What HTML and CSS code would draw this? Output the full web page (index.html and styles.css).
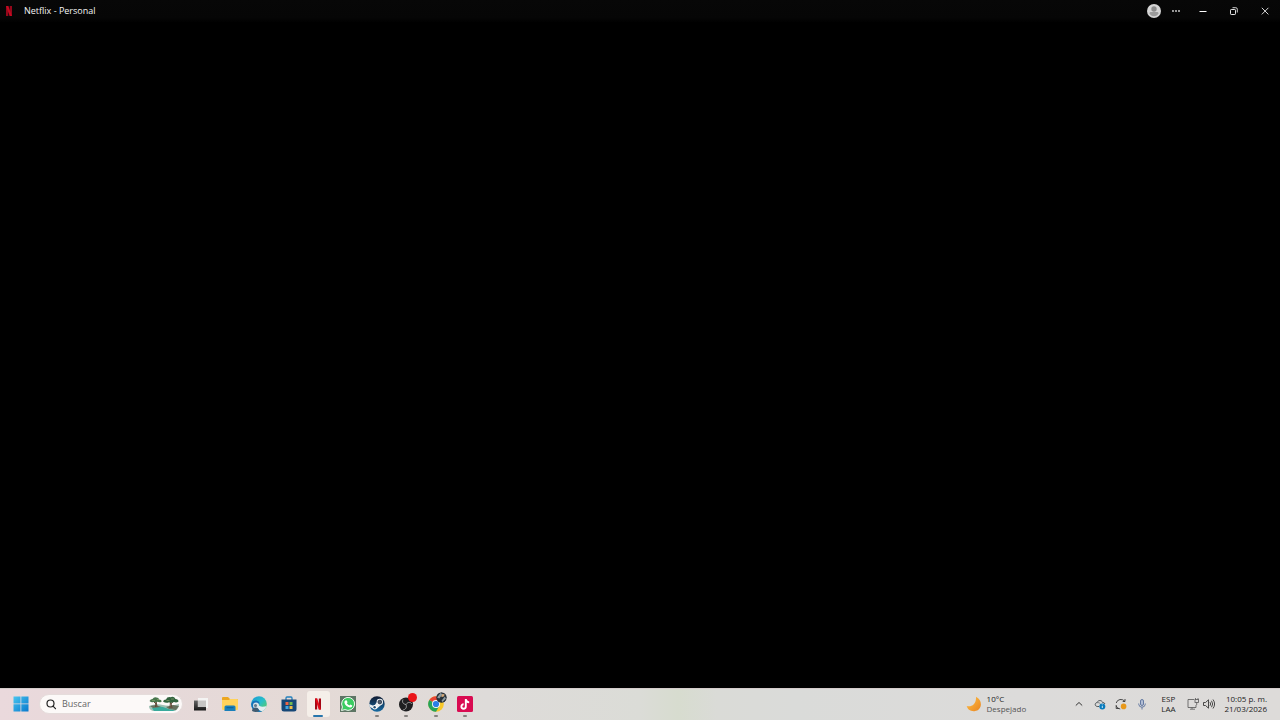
FILE: index.html
```html
<!DOCTYPE html>
<html lang="es">
<head>
<meta charset="utf-8">
<meta name="viewport" content="width=device-width, initial-scale=1">
<title>Netflix - Personal</title>
<link rel="stylesheet" href="styles.css">
</head>
<body>
<header class="titlebar">
  <svg class="app-logo" viewBox="0 0 8 12" aria-hidden="true"><path d="M1 1h2.300v10H1zM4.700 1H7v10H4.700z" fill="#95081b"/><path d="M1 1h2.300L7 11H4.700z" fill="#c40a21"/></svg>
  <h1 class="window-title">Netflix - Personal</h1>
  <button class="profile" aria-label="Perfil"><svg viewBox="0 0 14 14"><circle cx="7" cy="7" r="7" fill="#d5d5d5"/><circle cx="7" cy="5" r="2.7" fill="#8c8c8c"/><path d="M2.6 9.2c0-1 .8-1.2 1.5-1.2h5.8c.7 0 1.5.2 1.5 1.2C11 11.300 9 12.200 7 12.200S3 11.300 2.600 9.200z" fill="#9b9b9b"/></svg></button>
  <button class="more" aria-label="Más opciones"><svg viewBox="0 0 10 10" fill="#ddd"><circle cx="2" cy="5" r=".9"/><circle cx="5" cy="5" r=".9"/><circle cx="8" cy="5" r=".9"/></svg></button>
  <div class="window-controls">
    <button aria-label="Minimizar"><svg viewBox="0 0 10 10"><path d="M1.500 5.500h7" stroke="#fff"/></svg></button>
    <button aria-label="Restaurar"><svg viewBox="0 0 10 10" fill="none" stroke="#e4e4e4"><rect x="1.500" y="3.500" width="5" height="5" rx=".7"/><path d="M3.500 1.700h3.300q1.500 0 1.500 1.500v3.300" stroke-width=".9"/></svg></button>
    <button aria-label="Cerrar"><svg viewBox="0 0 10 10"><path d="M1.800 1.800l6.600 6.600M8.400 1.800l-6.600 6.600" stroke="#eee" stroke-width=".9"/></svg></button>
  </div>
</header>

<main class="player" aria-label="Reproductor"></main>

<footer class="taskbar">
  <button class="start" aria-label="Inicio"><svg viewBox="0 0 16 16"><defs><linearGradient id="win" x2="1" y2="1"><stop stop-color="#48c5ef"/><stop offset="1" stop-color="#0878cd"/></linearGradient></defs><path d="M.5.500h7v7h-7zM8.300.500h7.200v7H8.300zM.500 8.300h7v7.200h-7zM8.300 8.300h7.200v7.200H8.300z" fill="url(#win)"/></svg></button>
  <label class="search">
    <svg class="search-icon" viewBox="0 0 12 12" fill="none" stroke="#222" stroke-width="1.200"><circle cx="5.500" cy="5.500" r="3.500"/><path d="M8 8.100l2.500 2.600" stroke-linecap="round"/></svg>
    <input class="search-input" type="text" placeholder="Buscar" aria-label="Buscar">
    <svg class="search-art" viewBox="0 0 32 16" aria-hidden="true">
      <path d="M1 10q7-3 14-1t16-1q0 5-4 7H5q-4-1-4-5z" fill="#9fc0b4"/>
      <path d="M4 12q8-3 14 0t10 1l-3 2H6z" fill="#38aa9c"/>
      <path d="M2 10l6-1 5 2-8 1zM18 11l7-2 6 1-3 4-7-1z" fill="#65705d"/>
      <path d="M7.500 11l.5-6 1 6M22 12l.5-7 1.500 7M22.800 8l3-3M8 8L5 5" stroke="#634735" fill="none"/>
      <path d="M1.500 5q1-2 3-2Q6 .500 8.500 1.500 11 1.500 11 3.500q3 .500 2.500 2.200-2 1-4 .1-2 1-4 .200-2 1-4-1z" fill="#47764c"/>
      <path d="M15 5.500q.500-2 3-2Q19 .700 22.500 1.200 26 0 27.500 3q3 0 3 2.500-2 1.500-4.500.500-2.500 1.500-5 .200-3 1.300-6-.700z" fill="#31633e"/>
      <path d="M4 4.500h3M9 3.500h2M18.500 4.500h3M23 3h3" stroke="#7c9b67" stroke-width=".8"/>
    </svg>
  </label>

  <nav class="apps" aria-label="Aplicaciones">
    <button class="app" aria-label="Vista de tareas"><svg viewBox="0 0 16 16"><defs><linearGradient id="tv" x2="0" y2="1"><stop stop-color="#666"/><stop offset="1" stop-color="#171717"/></linearGradient></defs><path d="M5 2h10v10H5z" fill="#f4f4f3"/><path d="M1 4.500h3.800V11H13v3.500H1z" fill="url(#tv)"/><path d="M5 4.500h8V11H5z" fill="#c6c5c4"/></svg></button>
    <button class="app" aria-label="Explorador de archivos"><svg viewBox="0 0 16 16"><path d="M0 2q0-1 1-1h5l2 2h7q1 0 1 1v9H0z" fill="#eca720"/><path d="M0 4h7l1-1h7q1 0 1 1v9q0 1-1 1H1q-1 0-1-1z" fill="#ffd35b"/><path d="M2.500 11q0-1.500 1.500-1.500h8q1.500 0 1.500 1.500v4h-11z" fill="#187fba"/><path d="M4.500 11.700h7" stroke="#0b5e92"/></svg></button>
    <button class="app" aria-label="Microsoft Edge"><svg viewBox="0 0 16 16"><defs><linearGradient id="edge" x2="1" y2="1"><stop stop-color="#1b99d6"/><stop offset=".5" stop-color="#28bfc9"/><stop offset="1" stop-color="#69cf47"/></linearGradient></defs><circle cx="8" cy="8" r="7.800" fill="url(#edge)"/><path d="M.2 8C1 4 6 3.500 8 6c1 1.300.200 2 0 3 .500 2.300 4 2.700 7 1.500C13.700 14 11 16 8 16 3 16-.100 12 .2 8z" fill="#1673b8"/><path d="M7 7.500c1 3.500 4.500 4 8.500 2.500-.700 2.500-2 4-4 5-3 .300-6-2-4.500-7.500z" fill="#e2eef0"/><circle cx="5" cy="9.500" r="3" fill="#d7e3e9"/><path d="M1 15q.200-3.500 3.500-3.500T8 15q-3 2-7 0z" fill="#405b70"/><circle cx="4.500" cy="9.500" r="1.600" fill="#657d8e"/></svg></button>
    <button class="app" aria-label="Microsoft Store"><svg viewBox="0 0 16 16"><path d="M5 4V2q0-1 1-1h4q1 0 1 1v2" fill="none" stroke="#2380bd" stroke-width="1.300"/><path d="M.500 3.500h15V13q0 2.500-2.500 2.500H3Q.500 15.500.500 13z" fill="#164777"/><path d="M4.500 6h3v3h-3z" fill="#ee6546"/><path d="M8.500 6h3v3h-3z" fill="#72b951"/><path d="M4.500 10h3v3h-3z" fill="#40a6e4"/><path d="M8.500 10h3v3h-3z" fill="#f0bd46"/></svg></button>
    <button class="app active running" aria-label="Netflix" aria-current="true"><svg viewBox="0 0 16 16"><path d="M5 2.500h2.200v11H5zM8.800 2.500H11v11H8.800z" fill="#a50714"/><path d="M5 2.500h2.200l3.800 11H8.800z" fill="#e30918"/></svg></button>
    <button class="app" aria-label="WhatsApp"><svg viewBox="0 0 16 16"><path d="M0 0h16v16H0z" fill="#5d7564"/><path d="M1.500 14.500l.900-3.500a6.500 6.500 0 1 1 2.600 2.600z" fill="#3acc61" stroke="#eff8ef" stroke-width="1"/><path d="M5.300 4.400l1.300-.200 1 2.100-.800 1q.900 1.500 2.600 2.200l1-.900 1.900 1q0 2-2 2C7 11.200 4.300 8.200 4.400 6q.1-1 .9-1.600z" fill="#fff"/></svg></button>
    <button class="app running" aria-label="Steam"><svg viewBox="0 0 16 16"><defs><linearGradient id="steam" x2="0" y2="1"><stop stop-color="#101a31"/><stop offset="1" stop-color="#176ca4"/></linearGradient></defs><circle cx="8" cy="8" r="7.700" fill="url(#steam)"/><path d="M0 8l5 2 3-4 4 3-4 3.500-4 0L.8 11z" fill="#e8edf0"/><circle cx="10.800" cy="6" r="3.200" fill="#f1f3f4"/><circle cx="10.800" cy="6" r="1.900" fill="#53606e" stroke="#1b2a42" stroke-width=".7"/><circle cx="5.800" cy="11.200" r="2.200" fill="#fff"/><circle cx="5.600" cy="11.200" r="1.200" fill="#254e73"/></svg></button>
    <button class="app running" aria-label="OBS Studio"><svg viewBox="0 0 16 16"><circle cx="8" cy="8.500" r="7" fill="#1e1e20"/><g fill="none" stroke="#b8b8b8" stroke-width=".8"><path d="M8 8.500C4.500 8 4 5.500 5 3.500M8 8.500c2-3 4.500-2.500 6-.500M8 8.500c1.200 3-.500 5-3 5.500"/></g></svg><span class="badge record"></span></button>
    <button class="app running" aria-label="Google Chrome"><svg viewBox="0 0 16 16"><circle cx="8" cy="8" r="7.800" fill="#f8c829"/><path d="M8 8L1.300 4A7.800 7.800 0 0 1 14.700 4H8z" fill="#e84435"/><path d="M8 8L1.300 4A7.800 7.800 0 0 0 8 15.800l3.300-5.900z" fill="#24a35a"/><circle cx="8" cy="8" r="4" fill="#f3f6f5"/><circle cx="8" cy="8" r="3.100" fill="#287ee6"/></svg><svg class="badge avatar" viewBox="0 0 10 10"><circle cx="5" cy="5" r="4.800" fill="#26313a"/><path d="M1 5l3-4 2 1-3 4zM5 8l3-4 1 2-3 3z" fill="#8e9ca2"/><path d="M6 1.500l2 1-1.500 2-2-.5z" fill="#d5aa79"/></svg></button>
    <button class="app running" aria-label="TikTok"><svg viewBox="0 0 16 16"><rect width="16" height="16" rx="1.500" fill="#d90b51"/><path d="M8.800 3v7.500a2.200 2.200 0 1 1-2.200-2.200M8.800 3.500q.700 2.700 3.400 2.900" fill="none" stroke="#fff" stroke-width="1.900"/></svg></button>
  </nav>

  <button class="weather"><svg viewBox="0 0 16 16"><defs><linearGradient id="moon" x2="1" y2="1"><stop stop-color="#ffc348"/><stop offset="1" stop-color="#e98420"/></linearGradient></defs><path d="M10 .800C17 4 16.500 14.500 8.500 15.200 4 15.500 1.500 13 .700 10 5 11.500 10.500 8.500 10 .800z" fill="url(#moon)"/></svg><span class="stack"><span>10°C</span><span class="muted">Despejado</span></span></button>

  <div class="tray">
    <button aria-label="Mostrar iconos ocultos"><svg viewBox="0 0 12 12"><path d="M2.800 7.500L6 4.500l3.200 3" fill="none" stroke="#333"/></svg></button>
    <button aria-label="OneDrive"><svg viewBox="0 0 12 12"><path d="M5 8.500H3.200C.4 8 .8 4.800 3 4.600 4 1.800 8 2 8.600 4.500q2 0 2.400 1.500" fill="none" stroke="#4d5559"/><path d="M3 4.600q2.500-.4 3.500 1.400" fill="none" stroke="#6c7478" stroke-width=".8"/><circle cx="8.300" cy="8.500" r="3" fill="#087bbd"/><path d="M8.300 8v2M8.300 6.500v.8" stroke="#fff" stroke-width=".8"/></svg></button>
    <button aria-label="Actualizaciones"><svg viewBox="0 0 12 12"><path d="M1.200 5Q2 2 5 1.500 8 1 10 3.500V1M10 3.500H7.700M1.200 7v3.500H4M1.200 8q1 2.600 4 3" fill="none" stroke="#393939" stroke-width=".9"/><circle cx="8.600" cy="8.400" r="2.800" fill="#e8991b"/></svg></button>
    <button aria-label="Micrófono"><svg viewBox="0 0 12 12" fill="none" stroke="#59719c" stroke-width=".9"><rect x="4.500" y="1.500" width="3" height="6" rx="1.500" fill="#b2bed5"/><path d="M2.700 5.500v.700q.3 3 3.300 3t3.300-3v-.7M6 9.200v2.300"/></svg></button>
  </div>
  <button class="language stack"><span>ESP</span><span>LAA</span></button>
  <button class="network-sound" aria-label="Red y volumen">
    <svg viewBox="0 0 14 12" fill="none" stroke="#555" stroke-width=".8"><path d="M8 1.500H2v8h8V7M4 11.200h5M6 9.500v1.500"/><rect x="9" y="1.500" width="3.500" height="3"/><path d="M10.700 4.500V7M9.500 0v1.500M12 0v1.500"/></svg>
    <svg viewBox="0 0 14 12" fill="none" stroke="#383838" stroke-width=".9"><path d="M1.500 4.500h2l3-2.700v8.400l-3-2.700h-2zM8 4.200q1.300 1.800 0 3.600M9.500 2.800q2.300 3.200 0 6.400M11 1.500q3.200 4.500 0 9"/></svg>
  </button>
  <button class="clock stack"><time datetime="2026-03-21T22:05">10:05 p. m.</time><time datetime="2026-03-21">21/03/2026</time></button>
</footer>
</body>
</html>
```

FILE: styles.css
```css
* { box-sizing: border-box; }
body {
  margin: 0;
  min-height: 100vh;
  display: flex;
  flex-direction: column;
  background: #000;
  font-family: "Open Sans", "Noto Sans", sans-serif;
  font-size: 8px;
  line-height: 10px;
}
button {
  display: flex;
  align-items: center;
  justify-content: center;
  flex-shrink: 0;
  padding: 0;
  border: 0;
  background: none;
  color: #222;
  font: inherit;
}
svg { display: block; flex-shrink: 0; }

.titlebar {
  display: flex;
  align-items: center;
  height: 22px;
  padding-left: 5px;
  background: linear-gradient(#070707, #060606 80%, #010101);
}
.app-logo { width: 8px; height: 12px; }
.window-title {
  flex: 1;
  margin: 0 0 0 11px;
  color: #f5f5f5;
  font-size: 9px;
  font-weight: 400;
  line-height: 20px;
}
.profile svg { width: 14px; height: 14px; }
.more { width: 22px; height: 20px; margin-left: 4px; }
.more svg, .window-controls svg { width: 10px; height: 10px; }
.window-controls { display: flex; }
.window-controls button { width: 31px; height: 20px; }

.player { flex: 1; background: #000; }

.taskbar {
  display: flex;
  align-items: center;
  height: 32px;
  padding: 0 13px 1px;
  border-top: 1px solid #d4cccb;
  background: linear-gradient(90deg, #ead9dc 0%, #e6d9d9 13%, #e4dad6 25%, #dedbd9 38%, #dbdcd7 50%, #d7dccf 53%, #dadbd7 56%, #dadbd9 62%, #dcdbda 80%, #dddbd9 100%);
}
.start svg { width: 16px; height: 16px; }
.search {
  display: flex;
  align-items: center;
  width: 144px;
  height: 20px;
  margin-left: 10px;
  padding: 0 2px 0 5px;
  border: 1px solid #e5dcdb;
  border-radius: 10px;
  background: #fcf9f8;
}
.search-icon { width: 12px; height: 12px; }
.search-input {
  flex: 1;
  min-width: 0;
  margin-left: 5px;
  padding: 0;
  border: 0;
  outline: 0;
  background: none;
  color: #333;
  font: inherit;
  font-size: 9px;
}
.search-input::placeholder { color: #666; opacity: 1; }
.search-art { width: 32px; height: 16px; }

.apps {
  display: grid;
  grid-template-columns: repeat(10, 1fr);
  width: 294px;
  margin-left: 3px;
}
.app {
  position: relative;
  justify-self: center;
  width: 23px;
  height: 26px;
  border-radius: 3px;
}
.app svg { width: 16px; height: 16px; }
.app.active { background: #f5efe9; }
.running::after {
  content: "";
  position: absolute;
  bottom: 0;
  left: 50%;
  width: 4px;
  height: 2px;
  margin-left: -2px;
  border-radius: 1px;
  background: #85817e;
}
.active::after { width: 10px; margin-left: -5px; background: #2876ac; }
.badge { position: absolute; border-radius: 50%; }
.record { top: 2px; right: 1px; width: 9px; height: 9px; background: #ea1519; }
.app .avatar { top: 1px; right: 0; width: 11px; height: 11px; }

.stack { display: flex; flex-direction: column; justify-content: center; }
.weather { gap: 5px; margin-left: auto; }
.weather svg { width: 16px; height: 16px; }
.weather .stack { align-items: flex-start; }
.muted { color: #555; }
.tray { display: flex; margin-left: 42px; }
.tray button { width: 21px; height: 26px; }
.tray svg { width: 12px; height: 12px; }
.language { align-items: center; margin-left: 9px; }
.network-sound { gap: 2px; margin-left: 10px; }
.network-sound svg { width: 14px; height: 12px; }
.clock { align-items: flex-end; margin-left: 9px; }
```
